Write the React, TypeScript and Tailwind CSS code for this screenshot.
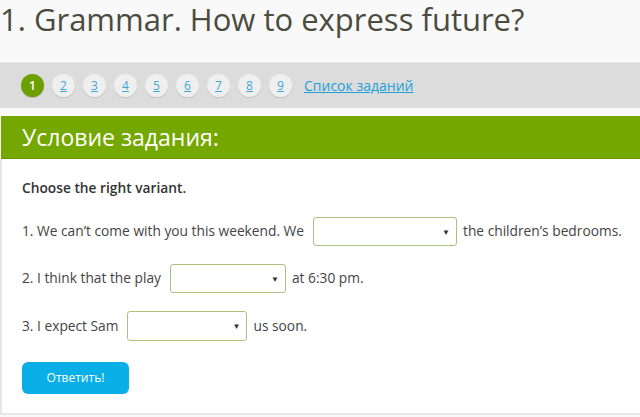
import React from "react";

const pages = [1, 2, 3, 4, 5, 6, 7, 8, 9];

function Select({ width }: { width: string }) {
  return (
    <div
      className={`${width} h-full ml-[9px] mr-[6px] rounded-[3px] border border-[#a9c27f] bg-white flex items-center justify-end pr-[6px] shrink-0`}
    >
      <span className="text-[8px] text-[#333] leading-none">▼</span>
    </div>
  );
}

export default function App() {
  return (
    <div className="w-[640px] h-[417px] overflow-hidden bg-[#f9f9f9] font-['Open_Sans',sans-serif]">
      {/* Title */}
      <h1 className="text-[31px] leading-[38px] text-[#4b4b3f] h-[62px] whitespace-nowrap">
        1. Grammar. How to express future?
      </h1>

      {/* Pager */}
      <div className="h-[46px] bg-[#dcdcdc] border-t border-[#e6e6e6] flex items-center pl-[21px] gap-[8px]">
        {pages.map((n) =>
          n === 1 ? (
            <span
              key={n}
              className="w-[23px] h-[23px] rounded-full bg-[#6e9f00] text-white text-[12px] font-semibold flex items-center justify-center shadow-[0_1px_1px_rgba(0,0,0,0.15)]"
            >
              {n}
            </span>
          ) : (
            <a
              key={n}
              className="w-[23px] h-[23px] rounded-full bg-[#efefef] text-[#3fa6d3] text-[12px] underline flex items-center justify-center shadow-[0_1px_1px_rgba(0,0,0,0.12)]"
            >
              {n}
            </a>
          )
        )}
        <a className="ml-[4px] text-[14px] text-[#22a0d8] underline">Список заданий</a>
      </div>

      <div className="h-[8px]" />

      {/* Task header */}
      <div className="ml-[1px] h-[43px] bg-[#74a800] border-b border-[#679600] flex items-center pl-[21px]">
        <h2 className="text-[23px] text-white leading-none">Условие задания:</h2>
      </div>

      {/* Task body */}
      <div className="h-[256px] bg-white border-l-2 border-b-2 border-[#e6e6e6] pl-[20px] pt-[19px] text-[13.75px] text-[#444]">
        <p className="font-semibold text-[#333] leading-[20px]">Choose the right variant.</p>

        <div className="mt-[19px] flex items-center h-[29px]">
          <span>1. We can’t come with you this weekend. We</span>
          <Select width="w-[144px]" />
          <span>the children’s bedrooms.</span>
        </div>

        <div className="mt-[18px] flex items-center h-[29px]">
          <span>2. I think that the play</span>
          <Select width="w-[116px]" />
          <span>at 6:30 pm.</span>
        </div>

        <div className="mt-[18px] flex items-center h-[30px]">
          <span>3. I expect Sam</span>
          <Select width="w-[120px]" />
          <span>us soon.</span>
        </div>

        <button className="mt-[21px] w-[107px] h-[32px] rounded-[6px] bg-[#0aafe8] text-white text-[12px]">
          Ответить!
        </button>
      </div>
    </div>
  );
}
